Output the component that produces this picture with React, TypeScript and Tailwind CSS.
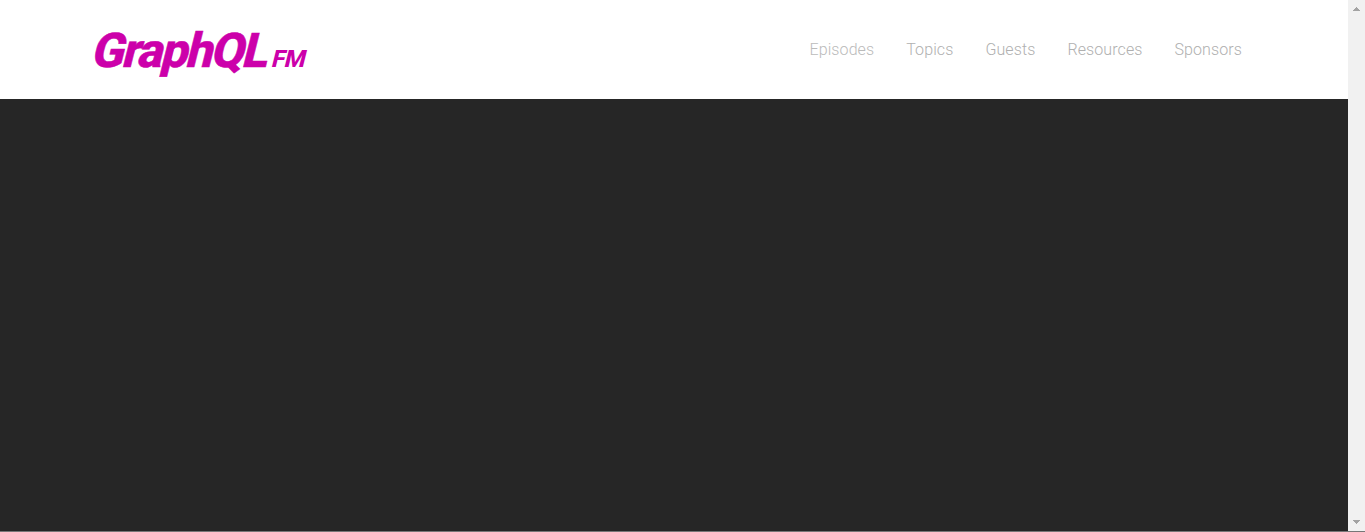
const links = ["Episodes", "Topics", "Guests", "Resources", "Sponsors"];

function Scrollbar() {
  return (
    <div className="flex w-[17px] flex-none flex-col items-center justify-between bg-[#f1f1f1]">
      <svg className="h-[17px] w-[17px]" viewBox="0 0 17 17" shapeRendering="crispEdges"><path d="M5 11h7L8.5 7z" fill="#a3a3a3" /></svg>
      <svg className="h-[17px] w-[17px]" viewBox="0 0 17 17" shapeRendering="crispEdges"><path d="M5 6h7L8.5 10z" fill="#a3a3a3" /></svg>
    </div>
  );
}

export default function App() {
  return (
    <div className="flex h-[532px] w-[1365px] flex-col overflow-hidden border-b border-[#777777] bg-white font-['Roboto',sans-serif]">
      <div className="flex min-h-0 flex-1">
        <div className="flex flex-1 flex-col">
          <header className="flex h-[99px] flex-none items-center justify-between pr-[106px] pl-[90px]">
            <a className="mt-[2px] flex origin-[0_46px] -skew-x-14 items-baseline gap-[6px] font-extrabold text-[#cc00aa]">
              <span className="text-[48px] leading-[60px] tracking-[-2px] [-webkit-text-stroke:0.5px_#cc00aa]">GraphQL</span>
              <span className="text-[24px] tracking-[-0.5px]">FM</span>
            </a>
            <nav className="flex gap-8 text-[16px] font-light tracking-[0.1px] text-[#b0b0b0]">
              {links.map((link) => <a key={link} className="first:text-[#bbbbbb]">{link}</a>)}
            </nav>
          </header>
          <main className="flex-1 bg-[#262626]" />
        </div>
        <Scrollbar />
      </div>
    </div>
  );
}
